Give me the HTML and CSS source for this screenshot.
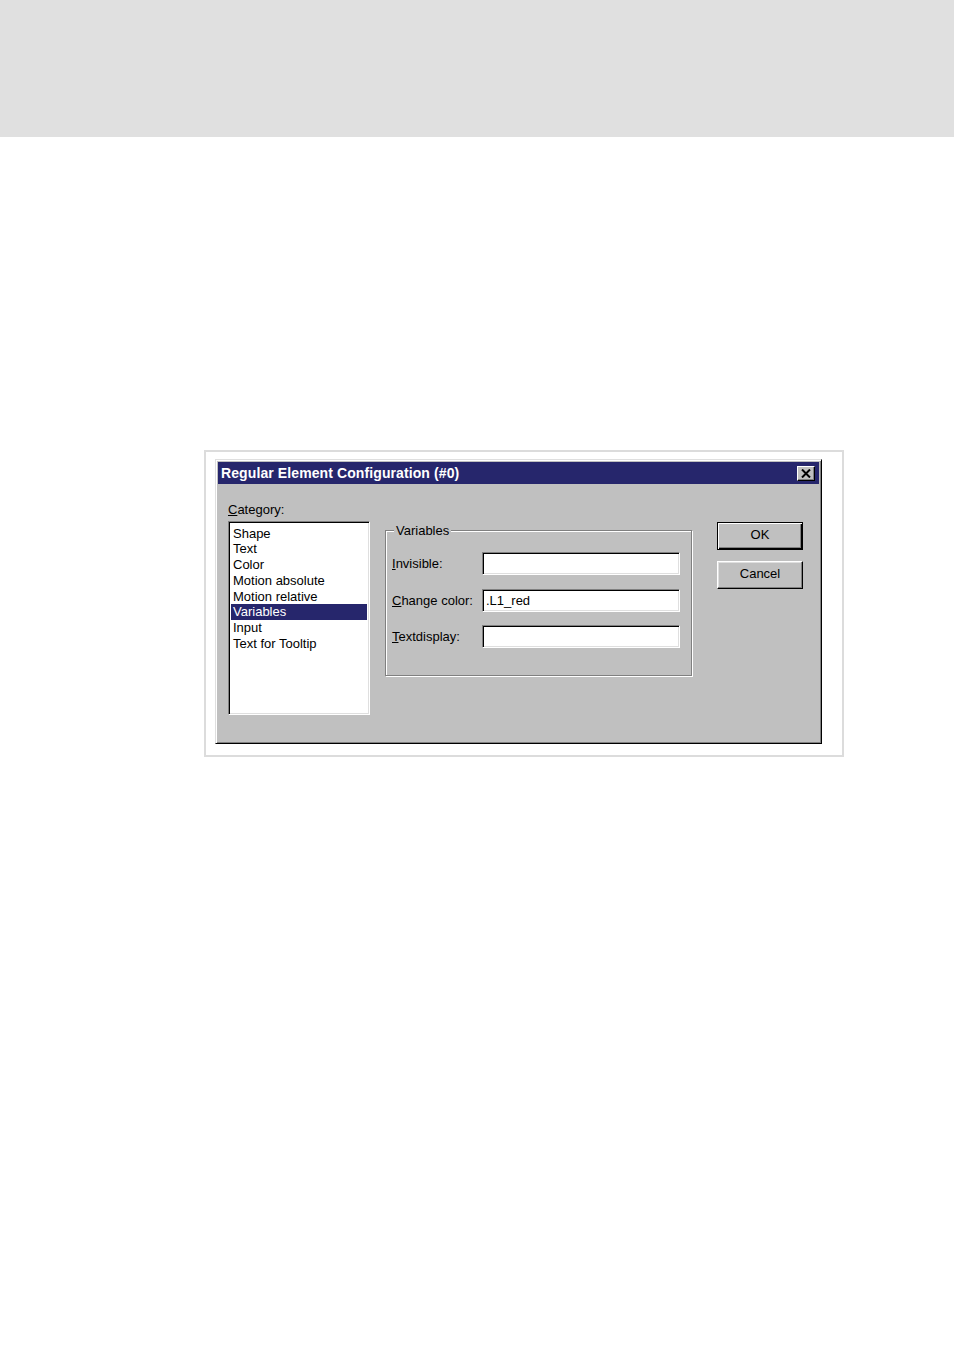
FILE: index.html
```html
<!DOCTYPE html>
<html>
<head>
<meta charset="utf-8">
<link rel="stylesheet" href="styles.css">
</head>
<body>
<div class="topband"></div>
<div class="page">
  <div class="frame">
    <div class="dialog">
      <div class="titlebar">
        <span class="title">Regular Element Configuration (#0)</span>
        <span class="close"><svg width="10" height="9" viewBox="0 0 10 9"><path d="M1 0.5 L9 8.5 M9 0.5 L1 8.5" stroke="#000" stroke-width="2"/></svg></span>
      </div>
      <div class="body">
        <div class="leftcol">
          <div class="catlabel"><u>C</u>ategory:</div>
          <div class="listbox">
            <div class="item">Shape</div>
            <div class="item">Text</div>
            <div class="item">Color</div>
            <div class="item">Motion absolute</div>
            <div class="item">Motion relative</div>
            <div class="item selected">Variables</div>
            <div class="item">Input</div>
            <div class="item">Text for Tooltip</div>
          </div>
        </div>
        <div class="group">
          <div class="legend">Variables</div>
          <div class="row"><span class="label"><u>I</u>nvisible:</span><span class="input"></span></div>
          <div class="row"><span class="label"><u>C</u>hange color:</span><span class="input">.L1_red</span></div>
          <div class="row"><span class="label"><u>T</u>extdisplay:</span><span class="input"></span></div>
        </div>
        <div class="buttons">
          <div class="btn default">OK</div>
          <div class="btn">Cancel</div>
        </div>
      </div>
    </div>
  </div>
</div>
</body>
</html>
```
FILE: styles.css
```css
html, body { margin: 0; padding: 0; background: #fff; }
body { font-family: "Liberation Sans", Arial, sans-serif; font-size: 13px; color: #000; }
.topband { height: 137px; background: #e0e0e0; }
.page { padding: 313px 0 0 204px; }
.frame {
  width: 627px; height: 296px;
  border: 2px solid #dcdcdc;
  padding: 7px 0 0 9px;
  box-sizing: content-box;
}
.dialog {
  width: 607px; height: 285px; box-sizing: border-box;
  background: #c0c0c0;
  border: 1px solid; border-color: #dfdfdf #000 #000 #dfdfdf;
  box-shadow: inset 1px 1px #fff, inset -1px -1px #808080;
  padding: 2px;
}
.titlebar {
  height: 22px; background: #26266c; color: #fff;
  display: flex; align-items: center; justify-content: space-between;
  padding: 0 4px 0 3px;
}
.title { font-weight: bold; font-size: 14px; letter-spacing: 0.1px; }
.close {
  width: 18px; height: 15px; box-sizing: border-box; background: #c0c0c0;
  border: 1px solid; border-color: #fff #000 #000 #fff;
  box-shadow: inset -1px -1px #808080;
  display: flex; align-items: center; justify-content: center;
}
.close svg { display: block; }
.body { display: flex; padding: 18px 0 0 10px; }
.leftcol { width: 142px; }
.catlabel { line-height: 15px; height: 15px; margin-bottom: 4px; }
.listbox {
  width: 142px; height: 194px; box-sizing: border-box; background: #fff;
  border: 1px solid; border-color: #808080 #fff #fff #808080;
  box-shadow: inset 1px 1px #000, inset -1px -1px #dfdfdf;
  padding: 3.5px 2px 0 2px;
  line-height: 15.8px;
}
.item { padding-left: 2px; height: 15.8px; }
.item.selected { background: #26266c; color: #fff; }
.group {
  margin: 28px 0 0 15px;
  width: 307px; height: 146px; box-sizing: border-box;
  border: 1px solid #808080;
  box-shadow: inset 1px 1px #fff, 1px 1px #fff;
  position: relative;
  padding: 21px 0 0 6px;
}
.legend {
  position: absolute; top: -8px; left: 8px; background: #c0c0c0;
  padding: 0 2px; line-height: 16px;
}
.row { display: flex; align-items: center; height: 23px; margin-bottom: 13.5px; }
.label { width: 90px; }
.input {
  width: 198px; height: 23px; box-sizing: border-box; background: #fff;
  border: 1px solid; border-color: #808080 #fff #fff #808080;
  box-shadow: inset 1px 1px #000, inset -1px -1px #dfdfdf;
  padding: 0 0 0 3px; line-height: 21px;
}
.buttons { margin: 20px 0 0 25px; display: flex; flex-direction: column; gap: 11px; }
.btn {
  width: 86px; height: 28px; box-sizing: border-box; text-align: center;
  line-height: 24px;
  border: 1px solid; border-color: #fff #000 #000 #fff;
  box-shadow: inset -1px -1px #808080, inset 1px 1px #dfdfdf;
  background: #c0c0c0;
}
.btn.default {
  border: 1px solid #000;
  box-shadow: inset 1px 1px #fff, inset -1px -1px #000, inset -2px -2px #808080;
}
```
